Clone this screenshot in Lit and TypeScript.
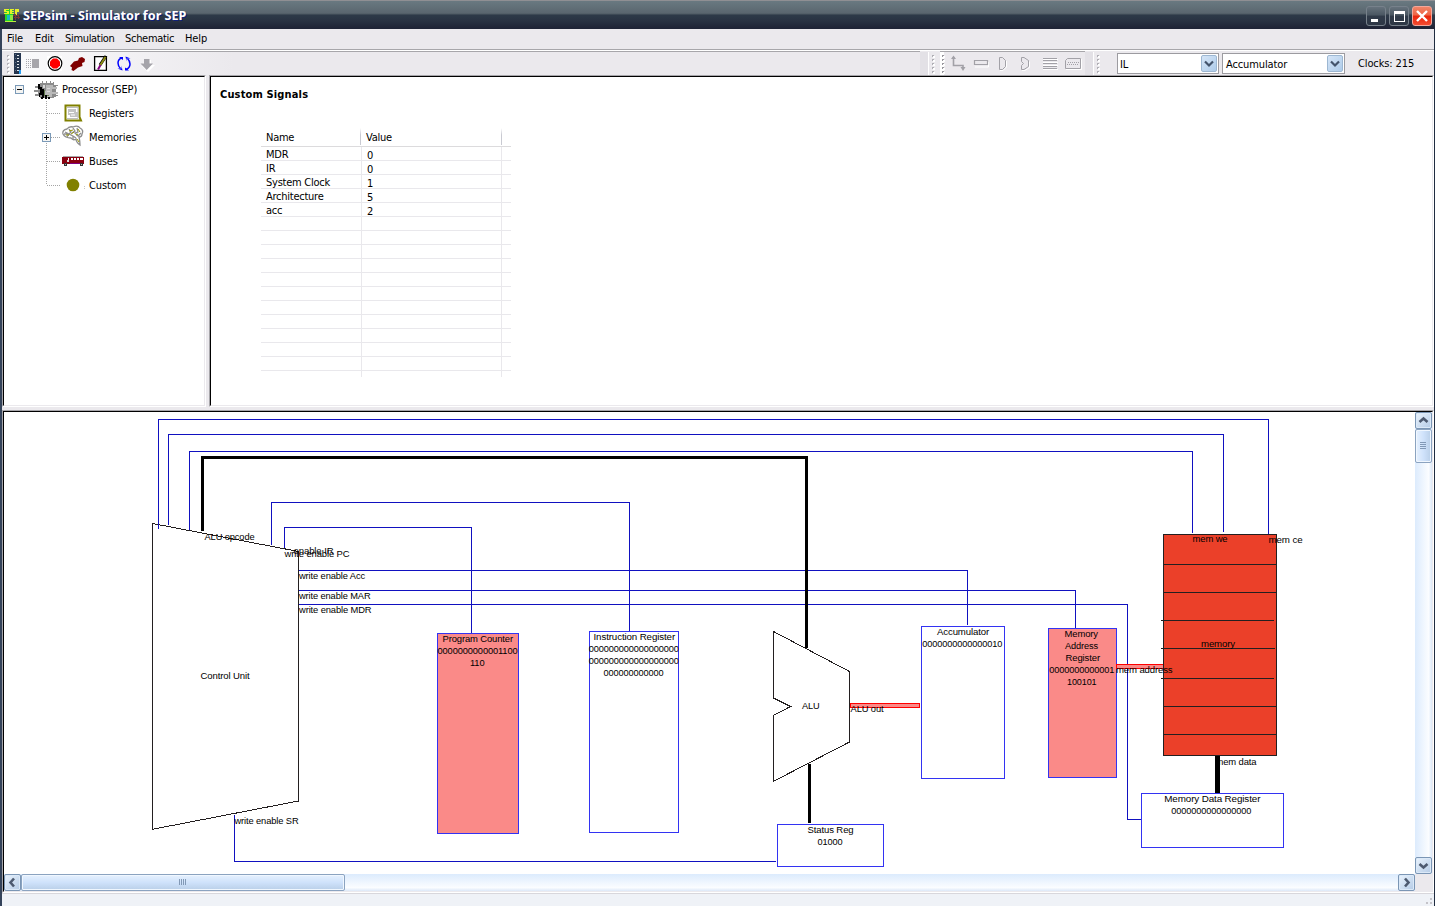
import { LitElement, html, svg, css, nothing } from "lit";
import { customElement } from "lit/decorators.js";

type Label = [string, number, number, number]; // text, left, baseline, width

const WIRES: string[] = [
  "M158.5 529V419.5H1268.5V534",
  "M168.5 525V434.5H1223.5V532",
  "M189.5 530V451.5H1192.5V533",
  "M271.5 545V502.5H629.5V631",
  "M284.5 548V527.5H471.5V633",
  "M299 570.5H967.5V625",
  "M299 590.5H1075.5V628",
  "M299 604.5H1127.5V819.5H1141",
  "M234.5 815V861.5H776",
];

const REGISTERS = [
  { x: 437, y: 633, w: 81, h: 200, hot: true },
  { x: 589, y: 631, w: 89, h: 201, hot: false },
  { x: 921, y: 626, w: 83, h: 152, hot: false },
  { x: 777, y: 824, w: 106, h: 42, hot: false },
  { x: 1048, y: 628, w: 68, h: 149, hot: true },
  { x: 1141, y: 793, w: 142, h: 54, hot: false },
];

const LABELS: Label[] = [
  ["ALU opcode", 204.5, 540, 50],
  ["enable IR", 293.5, 554, 40],
  ["write enable PC", 284.5, 557, 65],
  ["write enable Acc", 299, 579, 66],
  ["write enable MAR", 299, 599, 71.5],
  ["write enable MDR", 299, 613, 72.5],
  ["write enable SR", 234.5, 824, 64],
  ["Control Unit", 200.5, 679, 49],
  ["Program Counter", 442.5, 642, 70.5],
  ["0000000000001100", 437.5, 654, 80],
  ["110", 470, 666, 14.5],
  ["Instruction Register", 593.5, 640, 81.5],
  ["000000000000000000", 588.8, 652, 90],
  ["000000000000000000", 588.8, 664, 90],
  ["000000000000", 603.5, 676, 60],
  ["Accumulator", 937, 635, 52],
  ["0000000000000010", 922.3, 647, 80],
  ["ALU", 802, 709, 17.5],
  ["ALU out", 850.5, 712, 33],
  ["Status Reg", 807.5, 833, 46],
  ["01000", 817.5, 845, 25],
  ["Memory", 1064.5, 637, 33.5],
  ["Address", 1065, 649, 33],
  ["Register", 1065.5, 661, 34.5],
  ["0000000000001", 1049.3, 673, 65],
  ["100101", 1067, 685, 29.5],
  ["mem address", 1116, 673, 56.5],
  ["mem we", 1192.5, 542, 35],
  ["mem ce", 1268.5, 543, 34],
  ["memory", 1201, 647, 34],
  ["Memory Data Register", 1164.3, 802, 96],
  ["0000000000000000", 1171.3, 814, 80],
];

const label = ([text, x, y, w]: Label) =>
  svg`<text x=${x} y=${y} textLength=${w} lengthAdjust="spacingAndGlyphs">${text}</text>`;

@customElement("schematic-view")
class SchematicView extends LitElement {
  static styles = css`
    :host { display: block; }
    svg { display: block; background: #fff; }
    text { font-family: "Liberation Sans", Arial, sans-serif; font-size: 9.6px; fill: #000; }
    .wire { fill: none; stroke: #1111c0; shape-rendering: crispEdges; }
    .bus { fill: none; stroke: #000; shape-rendering: crispEdges; }
    .unit { fill: #fff; stroke: #231f20; shape-rendering: crispEdges; }
    .reg { fill: #fff; stroke: #3333f2; shape-rendering: crispEdges; }
    .hot { fill: #fa8a88; }
    .hotbus { fill: #fa8a88; stroke: #f00; shape-rendering: crispEdges; }
    .mem { fill: #eb4029; stroke: #231f20; shape-rendering: crispEdges; }
    .line { stroke: #231f20; shape-rendering: crispEdges; }
  `;
  render() {
    return html`<svg width="1411" height="462" viewBox="4 412 1411 462">
      <path class="unit" d="M152.5 523.5L298.5 551.5V801L152.5 829.3Z" />
      <path class="unit" d="M773.5 631.5L849.5 671.5V742L773.5 781.3V715.3L790.5 706.5L773.5 698Z" />
      ${WIRES.map((d) => svg`<path class="wire" d=${d} />`)}
      <path class="bus" stroke-width="3" d="M202.5 531V457.5H806.5V648M809.5 764V823" />
      ${REGISTERS.map(
        (r) => svg`<rect class=${r.hot ? "reg hot" : "reg"} x=${r.x + 0.5} y=${r.y + 0.5} width=${r.w} height=${r.h} />`
      )}
      <rect class="hotbus" x="850.5" y="703.5" width="69" height="4" />
      <rect class="hotbus" x="1116.5" y="664.5" width="47" height="4" />
      <rect class="mem" x="1163.5" y="534.5" width="113" height="221" />
      <path class="line" d="M1163 564.5h113M1163 592.5h113M1161 620.5h113M1161 648.5h114M1161 678.5h113M1163 706.5h113M1163 734.5h113" />
      ${LABELS.map(label)}
      ${label(["mem data", 1215.5, 765, 41])}
      <path class="bus" stroke-width="5" d="M1217.5 756V793" />
    </svg>`;
  }
}

const SIGNALS: [string, string][] = [
  ["MDR", "0"],
  ["IR", "0"],
  ["System Clock", "1"],
  ["Architecture", "5"],
  ["acc", "2"],
];

@customElement("signal-table")
class SignalTable extends LitElement {
  static styles = css`
    :host { display: block; width: 250px; letter-spacing: -0.25px; }
    .row { display: grid; grid-template-columns: 100px 140px 10px; height: 13px; border-bottom: 1px solid #e9e8ec; line-height: 16px; }
    .row > span { padding-left: 5px; white-space: pre; height: 13px; }
    .row > .v { border-left: 1px solid #e9e8ec; border-right: 1px solid #e9e8ec; line-height: 17px; height: 14px; margin-right: -1px; }
    .head { height: 19px; line-height: 21px; border-bottom-color: #dcdbdd; }
    .head > .v { border: 0; margin: 1px 0 0 -1px; height: 17px; line-height: 19px; padding-left: 6px; background: linear-gradient(#fff, #c9cad2 40%, #c9cad2) left/1px 100% no-repeat, linear-gradient(#fff, #c9cad2 40%, #c9cad2) right/1px 100% no-repeat; }
    .head > .v { margin-right: -1px; }
    .tail { height: 6px; border: 0; overflow: hidden; }
  `;
  render() {
    const rows = Array.from({ length: 16 }, (_, i) => SIGNALS[i] ?? ["", ""]);
    return html`
      <div class="row head"><span>Name</span><span class="v">Value</span></div>
      ${rows.map(([n, v]) => html`<div class="row"><span>${n}</span><span class="v">${v}</span></div>`)}
      <div class="row tail"><span></span><span class="v"></span></div>
    `;
  }
}

const chip = svg`<g shape-rendering="crispEdges">
  <path fill="#8c8c8c" d="M6 3h14v2h2v12h-2v1H6v-2H4V5h2z"/>
  <path fill="#b9b9b9" d="M12 5h7v2h4v2h-5v3h6v2h-6v3h-7z"/>
  <path fill="#8c8c8c" d="M1 6h4v2H1zM0 10h4v2H0zM1 14h4v2H1zM21 5h3v1h-3zM20 15h4v1h-4zM8 1h1v3H8zM12 1h1v3h-1zM16 1h1v3h-1zM19 2h1v2h-1z"/>
  <path fill="#000" d="M4 4h2v5H4zM6 7h2v8H6zM8 9h2v9H8zM5 13h1v4H5zM7 17h2v2H7zM11 15h2v4h-2zM14 17h2v2h-2z"/>
  <path fill="#d9d9d9" d="M9 5h2v3H9zM13 8h3v1h-3zM13 11h3v1h-3z"/><path fill="#5e7a4a" d="M10 10h1v6h-1zM13 15h2v1h-2z"/>
</g>`;
const registers = svg`<path d="M4.500 4.500H18.500V16L20 19.500H4.500Z" fill="#fff" stroke="#808000" stroke-width="2"/>
  <path d="M6 6.500h11v11H6" fill="none" stroke="#bdbdbd"/><path d="M7 8h8v3h2v5H9v-2H7z" fill="#c3c3c3"/><path d="M8 11.500h5M10 14h4" stroke="#fff"/>`;
const brain = svg`<g fill="none" stroke="#8e8e8e" stroke-width="1.300">
  <path d="M2 9Q1 5 6 4Q8 1 12 2Q17 0 19 3Q23 5 21 9Q21 12 18 12Q19 16 19 20Q15 17 15 14Q12 16 10 13Q4 13 2 9Z"/>
  <path d="M4 7L8 9L6 12M8 4L10 7L8 9L12 11L15 13M12 3L14 6L11 8M16 3L17 7L14 8L17 11L20 8M3 9h4M12 11v3"/></g>
  <path d="M10 9L13 7M15 10L17 9M16 14L18 17M8 6L12 5M5 10h3M17 4l2 3" stroke="#969600" fill="none"/>`;
const bus = svg`<g shape-rendering="crispEdges"><path fill="#8a0010" d="M1 8h22v7H1z"/><path fill="#a8a8a8" d="M2 7h20v1H2z"/>
  <path fill="#fff" d="M7 9h1v4H7zM10 9h2v2h-2zM13 9h2v2h-2zM16 9h2v2h-2zM19 9h3v2h-3z"/><path fill="#ddd" d="M6 11h2v2H6z"/><path fill="#800080" d="M9 14h10v1H9z"/>
  <path fill="#333" d="M3 14h3v3H3zM19 14h3v3h-3z"/><path fill="#b5b5b5" d="M4 15h1v1H4zM20 15h1v1h-1z"/></g>`;
const dot = svg`<circle cx="12" cy="12" r="6.300" fill="#808000"/><path d="M23.500 13v3" stroke="#c5c5c5" stroke-dasharray="1 1"/>`;

const NODES = [
  { name: "Registers", icon: registers, plus: false, last: false },
  { name: "Memories", icon: brain, plus: true, last: false },
  { name: "Buses", icon: bus, plus: false, last: false },
  { name: "Custom", icon: dot, plus: false, last: true },
];

const expander = (x: number, plus: boolean) => svg`
  <rect x=${x + 0.5} y="8.5" width="8" height="8" fill="#f4f4f2" stroke="#7b9ab8" shape-rendering="crispEdges"/>
  <path d=${`M${x + 2} 12.5h5` + (plus ? `M${x + 4.5} 10v5` : "")} stroke="#000" shape-rendering="crispEdges"/>`;

@customElement("processor-tree")
class ProcessorTree extends LitElement {
  static styles = css`
    :host { display: block; }
    .node { display: flex; height: 24px; }
    .name { line-height: 25px; padding-left: 4px; white-space: pre; }
    svg { display: block; flex: none; }
    .dots { stroke: #a5a5a5; stroke-dasharray: 1 1; fill: none; shape-rendering: crispEdges; }
  `;
  render() {
    return html`
      <div class="node">
        <svg width="30" height="24"><path class="dots" d="M9 12.5h3" />${expander(11, false)}</svg>
        <svg width="24" height="24" viewBox="0 -3 24 24">${chip}</svg>
        <span class="name">Processor (SEP)</span>
      </div>
      ${NODES.map(
        (n) => html`<div class="node">
          <svg width="57" height="24">
            <path class="dots" d=${n.last ? "M42.5 0V12" : "M42.5 0V24"} />
            <path class="dots" d="M43 12.5H57" />
            ${n.plus ? expander(38, true) : nothing}
          </svg>
          <svg width="24" height="24">${n.icon}</svg>
          <span class="name">${n.name}</span>
        </div>`
      )}
    `;
  }
}

// Toolbar glyphs share the window's coordinate space: x is the left edge, 51 the top.
const tool = (x: number, w: number, body: unknown) =>
  html`<svg width=${w} height="24" viewBox="${x} 51 ${w} 24">${body}</svg>`;

const grip = (x: number, color: string) =>
  svg`<g shape-rendering="crispEdges">${[55, 59, 63, 67, 71].map(
    (y) => svg`<path d="M${x + 1} ${y + 1}h2v2h-2z" fill="#fff"/><path d="M${x} ${y}h2v1h-1v1h-1z" fill=${color}/>`
  )}</g>`;

const ARROWS: Record<string, string> = {
  up: "M4.5 10L8.5 6.5L12.5 10",
  down: "M4.5 7L8.5 10.5L12.5 7",
  left: "M10 4.5L6.5 8.5L10 12.5",
  right: "M7 4.5L10.5 8.5L7 12.5",
};
const arrow = (dir: string) =>
  html`<span class="sbtn"><svg width="17" height="17"><path d=${ARROWS[dir]} fill="none" stroke="#4d5a70" stroke-width="2.6" /></svg></span>`;

@customElement("app-root")
class AppRoot extends LitElement {
  static styles = css`
    :host { display: block; width: 1435px; height: 906px; overflow: hidden; font: 11px "DejaVu Sans Condensed", "DejaVu Sans", sans-serif; font-stretch: condensed; letter-spacing: -0.12px; color: #000; }
    * { box-sizing: border-box; }
    svg { display: block; flex: none; }
    .window { display: flex; flex-direction: column; height: 906px; background: #ebe9ed; }
    .title { display: flex; align-items: center; height: 29px; padding: 2px 3px 0 4px; border-top: 1px solid #8f8f93;
      background: linear-gradient(#697981, #5a666f 12px, #4d5962 13px, #2d3a48 14px, #293242 20px, #1f2436 27px); }
    .caption { flex: 1; padding-left: 3px; color: #fff; font: bold 12.6px/26px "Noto Sans", "Open Sans", sans-serif; letter-spacing: 0.02px; text-shadow: 1px 1px 0 #10207a; white-space: pre; }
    .wbtns { display: flex; gap: 3px; }
    .wbtn { display: block; width: 20px; height: 20px; border: 1px solid #77818b; border-radius: 3px; background: linear-gradient(#66727c, #4a5762 45%, #303b49 50%, #2e3746); }
    .close { border-color: #f3a79b; background: linear-gradient(#f08468, #ee6545 45%, #e8260c 50%, #f44b30); }
    .body { flex: 1; display: flex; flex-direction: column; border-left: 2px solid #34435a; border-right: 1px solid #1f2c40; }
    .menu { display: flex; height: 20px; padding-left: 5px; line-height: 19px; }
    .menu span { white-space: pre; }
    .m1 { width: 28px; } .m2 { width: 30px; } .m3 { width: 60px; letter-spacing: -0.32px; } .m4 { width: 60px; letter-spacing: -0.3px; }
    .toolbar { display: flex; height: 26px; border-top: 1px solid #a7a6aa; box-shadow: inset 0 1px #fff; padding-top: 1px; }
    .band { display: flex; height: 24px; }
    .lined { border-top: 1px solid #a7a6aa; }
    .lined svg { margin-top: -1px; }
    .main { width: 906px; background: linear-gradient(90deg, #fafafb, #ebe9ed 220px); }
    .combo { display: flex; width: 102px; height: 21px; margin: 2px 3px 0 0; border: 1px solid #9c9ba0; background: #fff; line-height: 21px; }
    .wide { width: 123px; margin-right: 13px; }
    .combo span { flex: 1; padding-left: 2px; }
    .wide span { padding-left: 3px; }
    .drop { width: 16px; height: 17px; margin: 1px; border-radius: 2px; border: 1px solid #9db7d2; background: linear-gradient(135deg, #d5e5f7, #aecbe9); }
    .clocks { line-height: 26px; white-space: pre; }
    .pane { border: 1px solid; border-color: #a7a6aa #fff #fff #a7a6aa; }
    .inner { height: 100%; border: 1px solid; border-color: #000 #ebe9ed #ebe9ed #000; background: #fff; overflow: hidden; }
    .top { display: flex; gap: 3px; height: 332px; }
    .left { width: 204px; }
    .right { flex: 1; }
    .details { padding: 9px 0 0 9px; }
    .heading { font-weight: bold; font-size: 11px; line-height: 18px; letter-spacing: 0.15px; margin: 0; white-space: pre; }
    .details signal-table { margin: 23px 0 0 41px; }
    .bottom { height: 483px; margin-top: 3px; }
    .work { display: grid; grid-template-columns: 1411px 17px; grid-template-rows: 462px 17px; background: #ebe9ed; }
    .vs { display: flex; flex-direction: column; background: linear-gradient(90deg, #dcebfd, #fbfdff 80%, #dce8f8); }
    .hs { display: flex; background: linear-gradient(#dcebfd, #fbfdff 80%, #dce8f8); }
    .sbtn { display: block; width: 17px; height: 17px; border: 1px solid #7b96b5; border-radius: 2px; background: linear-gradient(135deg, #eaf3fd, #b4cbe6); box-shadow: inset 0 0 0 1px #dbe9f8; }
    .sbtn svg { margin: -1px; }
    .fill { flex: 1; }
    .thumb { display: flex; align-items: center; justify-content: center; border: 1px solid #8ba3c0; border-radius: 2px; box-shadow: inset 0 0 0 1px #f0f7ff; }
    .vt { width: 17px; height: 34px; background: linear-gradient(90deg, #e6f1fe, #cfe2fb 50%, #b9cfe8); }
    .ht { width: 324px; height: 17px; background: linear-gradient(#e6f1fe, #cfe2fb 50%, #b9cfe8); }
    .status { display: flex; justify-content: flex-end; height: 13px; border-top: 1px solid #d8d7dc; background: #eff2f7; }
  `;

  render() {
    const gray = "#a2a1a7";
    return html`<div class="window">
      <div class="title">
        <svg width="16" height="16" viewBox="0 0 16 16" shape-rendering="crispEdges">
          <path fill="#26d526" d="M1 1h8v13H1z" /><path fill="#e6f02a" d="M0 1h5v1H2v1h3v3H0V5h3V4H0zM6 1h4v1H8v1h2v1H8v1h2v1H6zM11 1h4v3h-2v3h-2z" />
          <path fill="#19b8c6" d="M3 7h3v5H3z" /><path fill="#8fe83e" d="M6 7h3v5H6z" />
          <path fill="#7c3a3a" d="M9 7h6v1H9zM10 9h6v1h-6zM11 6h1v6h-1zM14 6h1v5h-1z" /><path fill="#b7ee3c" d="M1 13h11v1H1z" />
        </svg>
        <span class="caption">SEPsim - Simulator for SEP</span>
        <span class="wbtns">
          <span class="wbtn"><svg width="18" height="18"><path fill="#fff" d="M4 12h7v3H4z" /></svg></span>
          <span class="wbtn"><svg width="18" height="18"><path fill="#fff" fill-rule="evenodd" d="M4 4h11v11H4zM5 7v7h9V7z" /></svg></span>
          <span class="wbtn close"><svg width="18" height="18"><path d="M4 4L14 14M14 4L4 14" stroke="#fff" stroke-width="2.4" /></svg></span>
        </span>
      </div>
      <div class="body">
        <div class="menu">
          <span class="m1">File</span><span class="m2">Edit</span><span class="m3">Simulation</span><span class="m4">Schematic</span><span>Help</span>
        </div>
        <div class="toolbar">
          ${tool(2, 12, grip(7, "#b5b4ba"))}
          <div class="band lined main">
            ${tool(14, 9, svg`<g shape-rendering="crispEdges"><path fill="#26364f" d="M14 53h7v21h-7z"/><path d="M17.500 55V73" stroke="#e4e6ea" stroke-width="2" stroke-dasharray="1 2"/><path d="M15.500 54V73" stroke="#5b6b84" stroke-dasharray="1 3"/><path fill="#2a9df0" d="M19 70h2v4h-2z"/></g>`)}
            ${tool(23, 22, svg`<path d="M26.500 59V69M28.500 59V69M30.500 59V69" stroke="#aaa9ae" stroke-dasharray="1 1" shape-rendering="crispEdges"/><path fill="#a7a6ab" d="M32 59h7v9h-7z"/>`)}
            ${tool(45, 22, svg`<path fill="#fff" d="M47 56h15v15H47z"/><circle cx="55" cy="63.500" r="6.800" fill="#fff" stroke="#000" stroke-width="1.200"/><path fill="#f00" d="M53 58.500h4l3 3v4L57 68.500h-4l-3-3v-4z"/>`)}
            ${tool(67, 24, svg`<path fill="#800000" d="M70 66L74 61.500L78 60.500L79 58L82 57L85 59L84.500 62L82 63L82.500 66L78 67.500L73.500 71L71.500 70L72 67.500Z"/>`)}
            ${tool(91, 23, svg`<path fill="#fff" stroke="#000" stroke-width="1.300" d="M94.600 56.600H106.400V70.400H94.600Z"/><path d="M106 56L100 65" stroke="#000" stroke-width="3"/><path d="M105.500 57L100 65.500" stroke="#8c8c14" stroke-width="2"/><path d="M100.500 65L98 69.500" stroke="#800080" stroke-width="2"/>`)}
            ${tool(114, 23, svg`<path fill="none" stroke="#00f" stroke-width="1.500" d="M122 58Q118 59 118 63Q118 66 120.500 68.500M126 69.500Q130 68 130 64Q130 61 127.500 58.500"/><path fill="#00f" d="M119 57h4v3l-1.500-1zM129 70.500h-4v-3l1.500 1zM117.500 68.500h4v-3l1 5zM130.500 58.500h-4v3l-1-5z"/>`)}
            ${tool(137, 23, svg`<path fill="#fff" d="M145 60h6v5h4l-7 7-6-6z"/><path fill="#a5a4aa" d="M144 59h5.500v4.500h3.500L146.700 70L140.500 63.500H144z"/>`)}
          </div>
          ${tool(920, 20, svg`<g shape-rendering="crispEdges"><path fill="#e3e1e6" d="M920 52h8v23h-8z"/><path fill="#fff" d="M928 52h1v23h-1z"/></g>${grip(932, "#b0afb5")}`)}
          <div class="band lined">
            ${tool(940, 6, svg`<path fill="#fff" d="M940 52h4v23h-4z"/>${grip(942, "#99989e")}`)}
            ${tool(946, 22, svg`<path d="M953.500 57V65.500H963V69" fill="none" stroke=${gray} stroke-width="1.600"/><path fill=${gray} d="M951 59l2.500-3.500L956 59zM960.500 67h5L963 71z"/>`)}
            ${tool(968, 24, svg`<path d="M975 67h13.500v-5" stroke="#fff" fill="none"/><path d="M974.500 60.500h13v4h-13z" fill="none" stroke=${gray} stroke-width="1.200"/>`)}
            ${tool(992, 22, svg`<path d="M999.500 57.500h3l3 3v6l-3 3h-3z" fill="none" stroke=${gray}/><path d="M1000 70.500h3l3.500-3.500v-6" stroke="#fff" fill="none"/>`)}
            ${tool(1014, 24, svg`<path d="M1021.500 57.500h2.500l4.500 3v6l-4.500 3h-2.500v-4l2-2-2-2z" fill="none" stroke=${gray}/><path d="M1022 70.500h3l4.500-3v-6" stroke="#fff" fill="none"/>`)}
            ${tool(1038, 22, svg`<g shape-rendering="crispEdges"><path d="M1043 59.500h15M1043 62.500h15M1043 65.500h15M1043 69.500h15" stroke="#fff"/><path d="M1043 58.500h14M1043 60.500h14M1043 63.500h14M1043 66.500h14M1043 68.500h14" stroke=${gray}/></g>`)}
            ${tool(1060, 25, svg`<path d="M1067.500 58.500H1080.500V68.500H1065.500V60.500Z" fill="none" stroke=${gray}/><path d="M1068 62.500h11M1067 64.500h12" stroke=${gray} stroke-dasharray="1 1"/><path d="M1066 69.500h15.500V59" stroke="#fff" fill="none"/>`)}
          </div>
          ${tool(1085, 32, svg`<path fill="#e3e1e6" d="M1085 52h8v23h-8z"/><path fill="#fff" d="M1093 52h1v23h-1z"/>${grip(1097, "#b0afb5")}`)}
          <div class="combo"><span>IL</span><svg class="drop" viewBox="0 0 14 15"><path d="M3 5.500L7 9.500L11 5.500" fill="none" stroke="#43536b" stroke-width="2.200" /></svg></div>
          <div class="combo wide"><span>Accumulator</span><svg class="drop" viewBox="0 0 14 15"><path d="M3 5.500L7 9.500L11 5.500" fill="none" stroke="#43536b" stroke-width="2.200" /></svg></div>
          <span class="clocks">Clocks: 215</span>
        </div>
        <div class="top">
          <div class="pane left"><div class="inner"><processor-tree></processor-tree></div></div>
          <div class="pane right"><div class="inner details">
            <h1 class="heading">Custom Signals</h1>
            <signal-table></signal-table>
          </div></div>
        </div>
        <div class="pane bottom"><div class="inner work">
          <schematic-view></schematic-view>
          <div class="vs">
            ${arrow("up")}
            <span class="thumb vt"><svg width="7" height="8" shape-rendering="crispEdges"><path d="M0 .5h6M0 2.500h6M0 4.500h6M0 6.500h6" stroke="#8299b6" /></svg></span>
            <span class="fill"></span>${arrow("down")}
          </div>
          <div class="hs">
            ${arrow("left")}
            <span class="thumb ht"><svg width="8" height="7" shape-rendering="crispEdges"><path d="M.5 0v6M2.500 0v6M4.500 0v6M6.500 0v6" stroke="#8299b6" /></svg></span>
            <span class="fill"></span>${arrow("right")}
          </div>
        </div></div>
        <div class="status"><svg width="10" height="12"><path fill="#c4c3c9" d="M6 4h2v2H6zM6 8h2v2H6zM2 8h2v2H2z" /></svg></div>
      </div>
    </div>`;
  }
}
